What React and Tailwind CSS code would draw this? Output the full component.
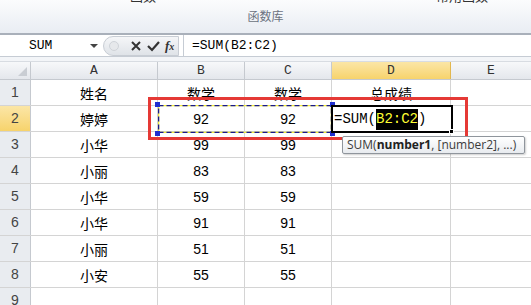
import React from 'react';

const rows = [
  ['姓名', '数学', '数学', '总成绩'],
  ['婷婷', '92', '92', ''],
  ['小华', '99', '99', ''],
  ['小丽', '83', '83', ''],
  ['小华', '59', '59', ''],
  ['小华', '91', '91', ''],
  ['小丽', '51', '51', ''],
  ['小安', '55', '55', ''],
  ['', '', '', ''],
];

const cjk = { fontFamily: '"Noto Sans CJK SC", "Liberation Sans", sans-serif' };
const mono = { fontFamily: '"Liberation Mono", "Noto Sans CJK SC", monospace' };

function Cell({ w, children, isText }) {
  return (
    <div
      className={`${w} shrink-0 h-full border-r border-[#d4d4d4] flex items-center justify-center text-[14px] text-black pt-[2px]`}
      style={isText ? cjk : { fontFamily: '"Liberation Sans", sans-serif' }}
    >
      {children}
    </div>
  );
}

export default function App() {
  return (
    <div className="w-[531px] h-[305px] overflow-hidden bg-white relative select-none">
      {/* Ribbon bottom */}
      <div className="h-[35px] bg-gradient-to-b from-[#fbfcfd] to-[#e9edf3] border-b-2 border-[#a9b0ba] relative overflow-hidden" style={cjk}>
        <div className="flex text-[13px] text-[#333] -mt-[14px] h-[18px]">
          <span className="ml-[130px]">函数</span>
          <span className="ml-[280px]">常用函数</span>
        </div>
        <div className="text-center text-[12px] text-[#6b7280] mt-[3px]">函数库</div>
      </div>

      {/* Formula bar */}
      <div className="h-[22px] flex items-center bg-white border-b border-[#c6ccd4]">
        <div className="w-[88px] h-full flex items-center pl-[29px] text-[13px] text-black" style={mono}>SUM</div>
        <svg width="10" height="6" viewBox="0 0 10 6" className="ml-[1px]">
          <path d="M1 1 L9 1 L5 5 Z" fill="#444" />
        </svg>
        <div className="ml-[4px] h-[20px] w-[76px] rounded-l-full bg-gradient-to-b from-[#f5f6f8] to-[#dfe3e8] border border-[#c8cdd4] flex items-center">
          <div className="w-[10px] h-[10px] ml-[5px] rounded-full bg-[#e6e8eb] border border-[#cfd3d8]" />
          <svg width="12" height="12" viewBox="0 0 12 12" className="ml-[11px]">
            <path d="M2 2 L10 10 M10 2 L2 10" stroke="#333" strokeWidth="2" />
          </svg>
          <svg width="13" height="12" viewBox="0 0 13 12" className="ml-[5px]">
            <path d="M1 6 L5 10 L12 2" stroke="#333" strokeWidth="2.2" fill="none" />
          </svg>
          <span className="ml-[5px] text-[13px] italic font-bold text-[#333]" style={{ fontFamily: '"Liberation Serif", serif' }}>f<span className="text-[10px]">x</span></span>
        </div>
        <div className="h-full w-[1px] bg-[#c6ccd4] ml-[4px]" />
        <div className="pl-[8px] text-[13px] text-black" style={mono}>=SUM(B2:C2)</div>
      </div>

      {/* gap */}
      <div className="h-[5px] bg-[#f3f5f8] border-b border-[#d8dce2]" />

      {/* Column headers */}
      <div className="h-[18px] flex bg-gradient-to-b from-[#f7f8fa] to-[#e4e7ec] border-b border-[#c5c9cf] text-[13px] text-[#333]" style={mono}>
        <div className="w-[31px] shrink-0 border-r border-[#c5c9cf] relative">
          <div className="absolute right-[3px] bottom-[3px] w-0 h-0 border-l-[9px] border-l-transparent border-b-[9px] border-b-[#c9cdd3]" />
        </div>
        <div className="w-[127px] shrink-0 border-r border-[#c5c9cf] flex items-center justify-center">A</div>
        <div className="w-[87px] shrink-0 border-r border-[#c5c9cf] flex items-center justify-center">B</div>
        <div className="w-[87px] shrink-0 border-r border-[#c5c9cf] flex items-center justify-center">C</div>
        <div className="w-[119px] shrink-0 border-r border-[#e2b74f] bg-gradient-to-b from-[#fbe6a6] to-[#f7d36b] flex items-center justify-center">D</div>
        <div className="flex-1 flex items-center justify-center">E</div>
      </div>

      {/* Rows */}
      {rows.map((r, i) => (
        <div key={i} className="h-[26px] flex border-b border-[#d4d4d4]">
          <div
            className={`w-[31px] shrink-0 h-full border-r border-[#c5c9cf] flex items-end justify-center pb-[2px] text-[14px] text-[#444] ${i === 1 ? 'bg-gradient-to-b from-[#fbe6a6] to-[#f7d36b]' : 'bg-[#e9ecf0]'}`}
            style={{ fontFamily: '"Liberation Sans", sans-serif' }}
          >
            {i + 1}
          </div>
          <Cell w="w-[127px]" isText>{r[0]}</Cell>
          <Cell w="w-[87px]" isText={i === 0}>{r[1]}</Cell>
          <Cell w="w-[87px]" isText={i === 0}>{r[2]}</Cell>
          <Cell w="w-[119px]" isText>{r[3]}</Cell>
          <div className="flex-1" />
        </div>
      ))}

      {/* Copy range marching ants B2:C2 */}
      <div className="absolute left-[158px] top-[105px] w-[174px] h-[28px]">
        <svg width="174" height="28" className="absolute inset-0">
          <rect x="0.5" y="0.5" width="173" height="27" fill="none" stroke="#f2ee3a" strokeWidth="1.5" />
          <rect x="0.5" y="0.5" width="173" height="27" fill="none" stroke="#1a1a8c" strokeWidth="1.5" strokeDasharray="5 3" />
        </svg>
        <div className="absolute -left-[3px] -top-[3px] w-[5px] h-[5px] bg-[#1f2fd0]" />
        <div className="absolute -right-[3px] -top-[3px] w-[5px] h-[5px] bg-[#1f2fd0]" />
        <div className="absolute -left-[3px] -bottom-[3px] w-[5px] h-[5px] bg-[#1f2fd0]" />
        <div className="absolute -right-[3px] -bottom-[3px] w-[5px] h-[5px] bg-[#1f2fd0]" />
      </div>

      {/* Active cell D2 */}
      <div className="absolute left-[331px] top-[105px] w-[122px] h-[28px] border-2 border-black bg-white flex items-center pl-[1px] text-[14px] text-black" style={mono}>
        <span>=SUM(</span>
        <span className="bg-black text-[#ffff33]">B2:C2</span>
        <span>)</span>
        <div className="absolute -right-[3px] -bottom-[3px] w-[5px] h-[5px] bg-black border border-white" />
      </div>

      {/* Red annotation box */}
      <div className="absolute left-[148px] top-[97px] w-[320px] h-[43px] border-[3px] border-[#e53935]" />

      {/* Tooltip */}
      <div
        className="absolute left-[342px] top-[136px] w-[183px] h-[18px] border border-[#8f959c] rounded-[2px] bg-gradient-to-b from-white to-[#e8ebef] shadow-[1px_1px_2px_rgba(0,0,0,0.2)] flex items-center pl-[4px] text-[12px] text-[#3c3c3c]"
        style={{ fontFamily: '"Open Sans", "Liberation Sans", sans-serif' }}
      >
        SUM(<b className="text-[#222]">number1</b>, [number2], ...)
      </div>
    </div>
  );
}
